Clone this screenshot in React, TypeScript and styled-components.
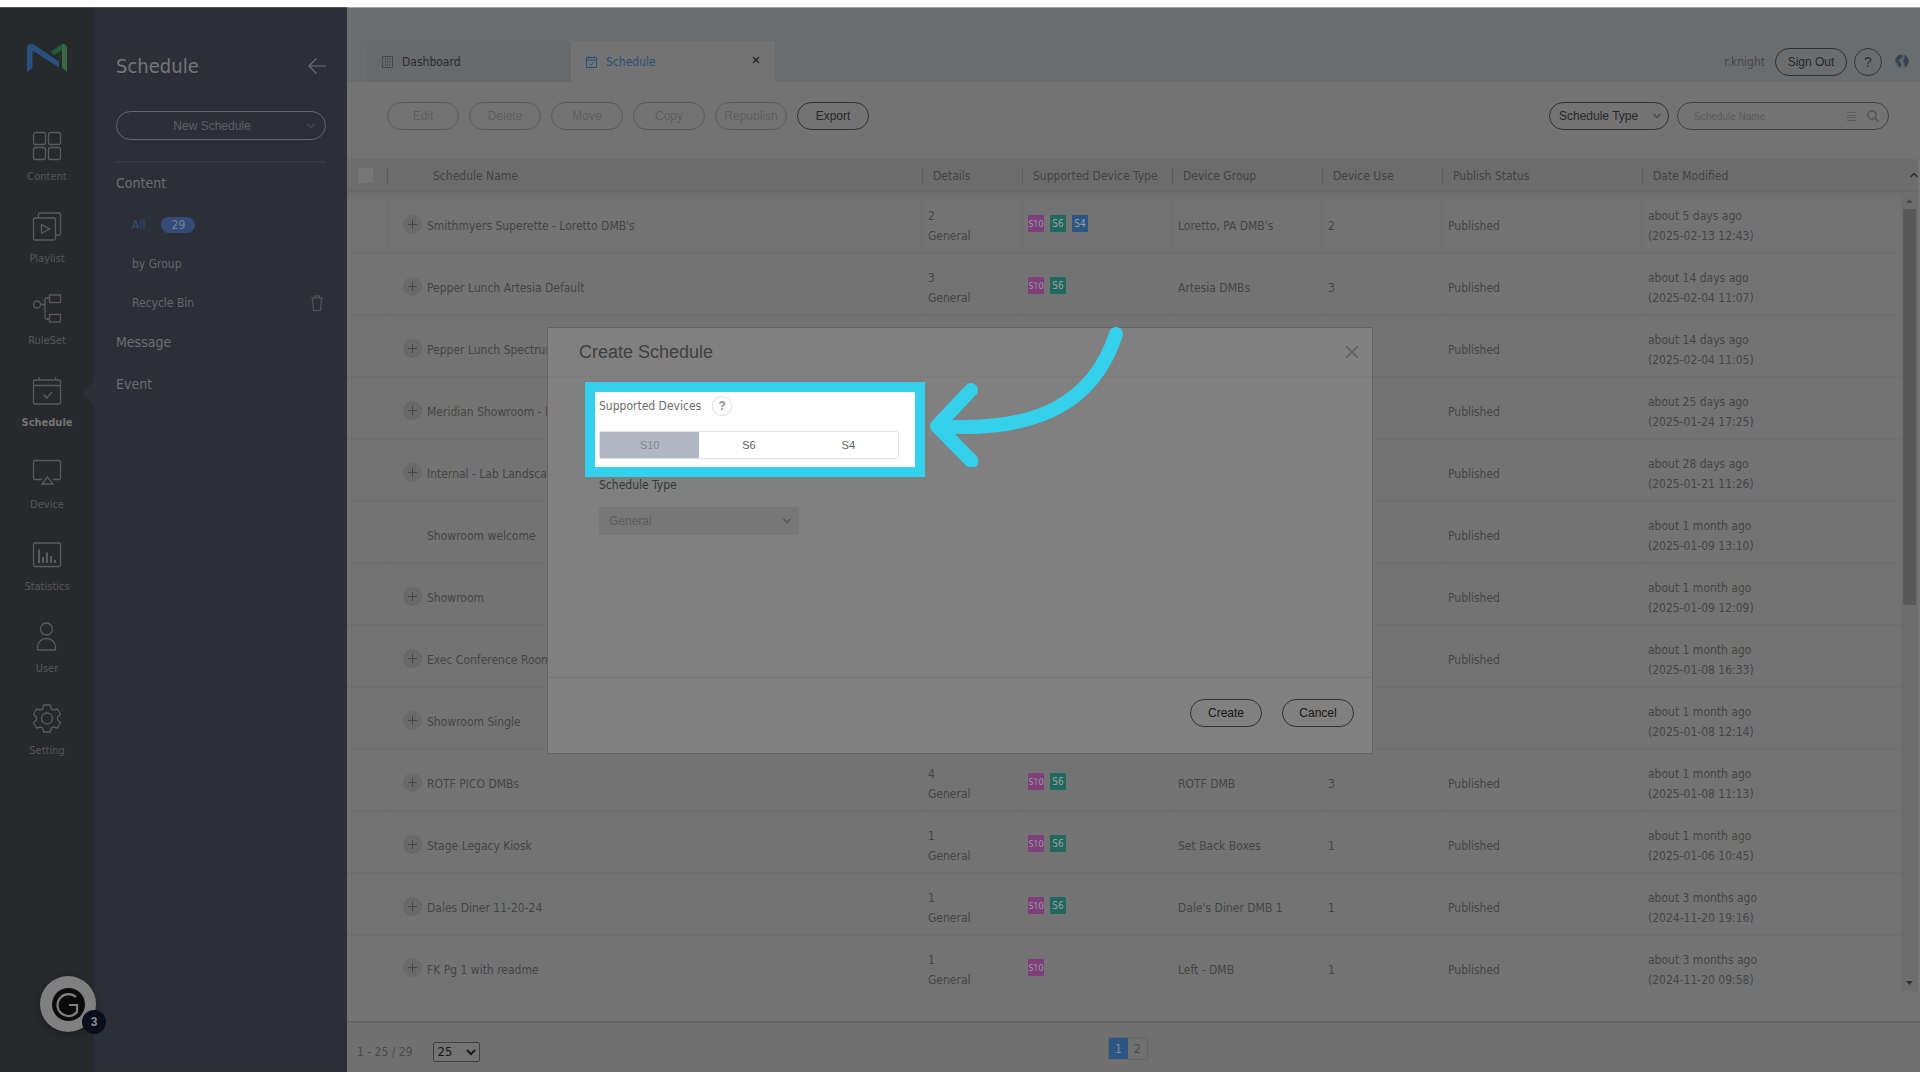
import React from "react";
import styled, { createGlobalStyle, css } from "styled-components";

const ui = `"DejaVu Sans Condensed", "Noto Sans", sans-serif`;
const arial = `"Liberation Sans", Arial, sans-serif`;
const cyan = "#34d0ec";

const Global = createGlobalStyle`
  * { box-sizing: border-box; }
  html, body, #root { height: 100%; }
  body { margin: 0; background: #fff; font-family: ${ui}; font-size: 12px; color: #444; overflow: hidden; }
  button, input, select { font-family: ${arial}; font-size: 12px; margin: 0; }
  button { padding: 0; background: none; border: 0; }
  a { color: inherit; text-decoration: none; }
  svg { display: block; flex: none; }
`;

const Page = styled.div`
  height: 100vh;
  padding: 7px 0 8px;
  display: flex;
`;

const Rail = styled.nav`
  width: 94px;
  flex: none;
  background: #28292c;
  border-top: 1px solid #55565a;
  display: flex;
  flex-direction: column;
  align-items: center;
  padding-top: 36px;
`;

const RailList = styled.div`
  width: 100%;
  margin-top: 58px;
`;

const RailItem = styled.a<{ $active?: boolean }>`
  position: relative;
  height: 82px;
  display: flex;
  flex-direction: column;
  align-items: center;
  gap: 11px;
  font-size: 11px;
  line-height: 14px;
  color: ${(p) => (p.$active ? "#757575" : "#575859")};
  font-weight: ${(p) => (p.$active ? 700 : 400)};
  ${(p) =>
    p.$active &&
    css`
      &::after {
        content: "";
        position: absolute;
        right: 0;
        top: 5px;
        border: 12px solid transparent;
        border-left: 0;
        border-right-color: #2d2f38;
      }
    `}
`;

const Side = styled.aside`
  width: 253px;
  flex: none;
  background: #2d2f38;
  border-top: 1px solid #55565a;
  padding: 38px 21px 0 22px;
  color: #6c6d70;
`;

const SideHead = styled.div`
  display: flex;
  align-items: center;
  justify-content: space-between;
  height: 40px;
  margin-bottom: 25px;
`;

const SideTitle = styled.h1`
  margin: 0;
  font-size: 20px;
  line-height: 42px;
  font-weight: 400;
  color: #757679;
`;

const NewButton = styled.button`
  width: 100%;
  height: 29px;
  border: 1px solid #66676b;
  border-radius: 15px;
  color: #5f6064;
  display: grid;
  grid-template-columns: 1fr 18px;
  align-items: center;
`;

const Rule = styled.hr`
  border: 0;
  height: 2px;
  background: #363841;
  margin: 21px 0 0;
`;

const SideGroup = styled.a`
  display: block;
  font-size: 14px;
  line-height: 40px;
  height: 42px;
`;

const SideLink = styled.a<{ $active?: boolean }>`
  display: flex;
  align-items: center;
  gap: 16px;
  height: 39px;
  padding: 0 3px 0 16px;
  color: ${(p) => (p.$active ? "#2c4d82" : "#66676a")};
  svg { margin-left: auto; }
`;

const Count = styled.span`
  background: #364a78;
  color: #75829c;
  border-radius: 8px;
  width: 34px;
  line-height: 16px;
  text-align: center;
`;

const Main = styled.main`
  flex: 1;
  min-width: 0;
  background: #737373;
  display: flex;
  flex-direction: column;
`;

const TopBar = styled.header`
  flex: none;
  height: 75px;
  background: #6b6c6e;
  border-top: 1px solid #a4a5a6;
  display: flex;
  align-items: flex-end;
  padding-left: 20px;
`;

const Tab = styled.a<{ $active?: boolean }>`
  width: 204px;
  height: 41px;
  display: flex;
  align-items: center;
  gap: 9px;
  padding: 0 15px;
  background: ${(p) => (p.$active ? "#737373" : "#67696d")};
  color: ${(p) => (p.$active ? "#284e7b" : "#2b2b2d")};
`;

const TabClose = styled.button`
  margin-left: auto;
  padding-bottom: 4px;
`;

const Account = styled.div`
  margin-left: auto;
  display: flex;
  align-items: center;
  height: 41px;
  padding-right: 11px;
  color: #454648;
`;

const Pill = styled.button<{ $off?: boolean; $dark?: boolean }>`
  width: 72px;
  height: 28px;
  border: 1px solid ${(p) => (p.$off ? "#5c5c5c" : "#303030")};
  border-radius: 14px;
  color: ${(p) => (p.$off ? "#5d5d5d" : p.$dark ? "#161616" : "#272727")};
`;

const Help = styled.button<{ $small?: boolean }>`
  width: ${(p) => (p.$small ? 20 : 28)}px;
  height: ${(p) => (p.$small ? 20 : 28)}px;
  border-radius: 50%;
  border: 1px solid ${(p) => (p.$small ? "#dddee4" : "#353638")};
  color: ${(p) => (p.$small ? "#8c8c8c" : "#303030")};
  font-size: ${(p) => (p.$small ? 12 : 14)}px;
  font-weight: ${(p) => (p.$small ? 700 : 400)};
`;

const AccountTools = styled.div`
  display: flex;
  align-items: center;
  gap: 7px;
  margin-left: 10px;
  svg { margin-left: 6px; }
`;

const Toolbar = styled.div`
  flex: none;
  height: 77px;
  display: flex;
  align-items: flex-start;
  gap: 10px;
  padding: 20px 31px 0 40px;
`;

const Filters = styled.div`
  margin-left: auto;
  display: flex;
  gap: 8px;
`;

const TypeButton = styled(Pill)`
  width: 120px;
  display: flex;
  align-items: center;
  justify-content: space-between;
  padding: 0 7px 0 9px;
`;

const Search = styled.label`
  width: 212px;
  height: 28px;
  border: 1px solid #404040;
  border-radius: 14px;
  display: flex;
  align-items: center;
  gap: 11px;
  padding: 0 9px 0 16px;
  input {
    flex: 1;
    min-width: 0;
    padding: 0;
    border: 0;
    outline: 0;
    background: none;
    font-size: 10px;
  }
  input::placeholder { color: #5a5a5a; opacity: 1; }
`;

const List = styled.div`
  flex: none;
  display: flex;
  padding-bottom: 30px;
  border-bottom: 2px solid #656565;
`;

const Grid = styled.table`
  flex: 1;
  width: 0;
  border-collapse: separate;
  border-spacing: 0;
  table-layout: fixed;
`;

const bar = (c: string) => `linear-gradient(${c}, ${c})`;

const Th = styled.th`
  height: 33px;
  padding: 2px 0 0 11px;
  text-align: left;
  font-weight: 400;
  line-height: 16px;
  color: #424242;
  border-bottom: 2px solid #676767;
  background: ${bar("#5c5c5c")} left 8px / 1px 18px no-repeat, #6c6c6c;
  &:first-child { padding-left: 11px; background: #6c6c6c; }
  &:nth-child(2) { padding-left: 46px; }
`;

const Check = styled.input`
  appearance: none;
  display: block;
  width: 15px;
  height: 15px;
  margin: 0;
  background: #767676;
`;

const Row = styled.tr`
  &:first-child td { box-shadow: inset 0 8px 8px -6px #6b6b6b; }
  &:last-child td { height: 55px; border-bottom: 0; padding-top: 2px; vertical-align: top; }
`;

const Td = styled.td<{ $raised?: boolean }>`
  height: 62px;
  padding: ${(p) => (p.$raised ? "2px 0 0 6px" : "8px 0 0 6px")};
  line-height: 20px;
  white-space: nowrap;
  overflow: hidden;
  border-bottom: 2px solid #6f6f6f;
  background: ${bar("#707070")} left 8px / 1px 100% no-repeat;
  &:first-child { background: none; }
`;

const Name = styled.div<{ $bare?: boolean }>`
  display: flex;
  align-items: center;
  gap: 5px;
  padding-left: ${(p) => (p.$bare ? 34 : 10)}px;
  svg { margin-bottom: 4px; }
`;

const Cell = styled.div<{ $top: number }>`
  padding-top: ${(p) => p.$top}px;
`;

const Chips = styled.div`
  display: flex;
  gap: 6px;
`;

const chipColors: Record<string, string> = { S10: "#7d3f7b", S6: "#20685e", S4: "#2b5582" };

const Chip = styled.span<{ $kind: string }>`
  width: 16px;
  height: 17px;
  line-height: 17px;
  border-radius: 1px;
  font-family: ${(p) => (p.$kind === "S10" ? `"Noto Sans", sans-serif` : ui)};
  font-size: ${(p) => (p.$kind === "S10" ? 9 : 10)}px;
  text-align: center;
  color: #9b9e9e;
  background: ${(p) => chipColors[p.$kind]};
`;

const ScrollSide = styled.div`
  width: 19px;
  flex: none;
  display: flex;
  flex-direction: column;
  border-right: 2px solid #777;
`;

const ScrollHead = styled.div`
  height: 33px;
  display: flex;
  align-items: center;
  justify-content: flex-end;
  background: #6c6c6c;
  border-bottom: 2px solid #676767;
`;

const Track = styled.div`
  flex: 1;
  padding: 0 2px;
  background: #6d6d6d;
  display: flex;
  flex-direction: column;
  align-items: center;
  justify-content: space-between;
`;

const Thumb = styled.div`
  width: 100%;
  height: 396px;
  background: #585858;
  margin-bottom: auto;
`;

const ArrowCell = styled.div`
  height: 17px;
  display: flex;
  align-items: center;
`;

const Footer = styled.footer`
  flex: 1;
  display: grid;
  grid-template-columns: 1fr auto 1fr;
  align-items: center;
  padding: 0 21px 0 10px;
  background: #707070;
  color: #4a4a4a;
`;

const PageInfo = styled.label`
  display: flex;
  align-items: center;
  gap: 20px;
  padding-top: 8px;
  select {
    width: 47px;
    height: 20px;
    padding: 0;
    font-family: ${ui};
    font-size: 13px;
    color: #191919;
    background: #737373;
    border: 1px solid #3f3f3f;
    border-radius: 2px;
  }
`;

const Pager = styled.div`
  display: flex;
  border: 1px solid #666;
  margin-top: 2px;
`;

const PageButton = styled.button<{ $on?: boolean }>`
  width: 19px;
  height: 21px;
  font-family: ${ui};
  color: ${(p) => (p.$on ? "#828d98" : "#484848")};
  background: ${(p) => (p.$on ? "#2b5582" : "transparent")};
`;

const Overlay = styled.div`
  position: fixed;
  inset: 0;
  display: flex;
  align-items: center;
  justify-content: center;
`;

const Dialog = styled.section`
  width: 826px;
  background: #808080;
  border: 1px solid #646464;
`;

const DialogHead = styled.header`
  height: 49px;
  display: flex;
  align-items: center;
  justify-content: space-between;
  padding: 1px 14px 0 31px;
  border-bottom: 1px solid #7b7b7b;
  h2 {
    margin: 0;
    font: 400 18px/24px ${arial};
    color: #3f3f3f;
  }
`;

const DialogBody = styled.div`
  height: 300px;
  padding: 5px 37px 0;
`;

const Spotlight = styled.fieldset`
  position: relative;
  width: 340px;
  height: 95px;
  margin: 0;
  padding: 4px 16px 0 4px;
  border: 10px solid ${cyan};
  background: #fff;
`;

const Pointer = styled.svg`
  position: absolute;
  left: 335px;
  top: -75px;
`;

const FieldHead = styled.div`
  display: flex;
  align-items: center;
  gap: 11px;
  height: 20px;
  margin-bottom: 15px;
  color: #6c6c6c;
`;

const Segments = styled.div`
  display: grid;
  grid-template-columns: repeat(3, 1fr);
  height: 28px;
  border: 1px solid #dddee6;
  border-radius: 3px;
`;

const Segment = styled.button<{ $on?: boolean }>`
  padding-top: 1px;
  font-size: 11px;
  color: ${(p) => (p.$on ? "#85878b" : "#606060")};
  background: ${(p) => (p.$on ? "#b2b7c3" : "#fff")};
`;

const Field = styled.div`
  padding: 0 14px;
  label {
    display: block;
    line-height: 16px;
    margin-bottom: 14px;
    color: #363636;
  }
`;

const SelectWrap = styled.div`
  width: 200px;
  height: 28px;
  display: flex;
  align-items: center;
  border-radius: 3px;
  background: #777;
  padding: 0 8px 0 10px;
  select {
    flex: 1;
    appearance: none;
    border: 0;
    padding: 0;
    background: none;
    color: #5c5c5c;
    opacity: 1;
  }
`;

const DialogFoot = styled.footer`
  height: 76px;
  display: flex;
  justify-content: flex-end;
  gap: 20px;
  padding: 21px 18px 0;
  border-top: 1px solid #747474;
`;

const ChatWidget = styled.button`
  position: fixed;
  left: 40px;
  bottom: 48px;
  width: 56px;
  height: 56px;
  border-radius: 50%;
  background: #808080;
  display: flex;
  align-items: center;
  justify-content: center;
  box-shadow: 0 2px 8px rgba(0, 0, 0, 0.3);
`;

const ChatCount = styled.span`
  position: absolute;
  left: 42px;
  top: 34px;
  width: 24px;
  height: 24px;
  line-height: 24px;
  border-radius: 50%;
  background: #080e1a;
  color: #8c8f94;
  font-weight: 700;
`;

const railIcons: Record<string, React.ReactNode> = {
  Content: (
    <>
      <rect x="0.5" y="2.500" width="12" height="12" rx="2" />
      <rect x="15.500" y="2.500" width="12" height="12" rx="2" />
      <rect x="0.5" y="17.500" width="12" height="12" rx="2" />
      <rect x="15.500" y="17.500" width="12" height="12" rx="2" />
    </>
  ),
  Playlist: (
    <>
      <rect x="0.5" y="6" width="22" height="22" rx="1.500" />
      <path d="M5.500 6V2.500a1.500 1.500 0 0 1 1.500-1.500h19a1.500 1.500 0 0 1 1.500 1.500v19a1.500 1.500 0 0 1-1.500 1.500h-3.500M8.500 12.500v9l8-4.500z" />
    </>
  ),
  RuleSet: (
    <>
      <circle cx="4" cy="10.500" r="3.500" />
      <path d="M7.500 10.500H12M16 4h-2.500a1.500 1.500 0 0 0-1.500 1.500v18a1.500 1.500 0 0 0 1.500 1.500H16" />
      <rect x="16.500" y="1" width="11" height="7.500" />
      <rect x="16.500" y="20.500" width="11" height="7.500" />
    </>
  ),
  Schedule: (
    <>
      <rect x="0.5" y="4" width="27" height="24" rx="1.500" />
      <path d="M6 1v3M22.500 1v3M.5 9.500h27M10.500 18.500l3.500 3.500 5-6" />
    </>
  ),
  Device: <path d="M9 21.500H2a1.500 1.500 0 0 1-1.500-1.500V4A1.500 1.500 0 0 1 2 2.500h24A1.500 1.500 0 0 1 27.500 4v16a1.500 1.500 0 0 1-1.500 1.500h-6M14.500 19l-5.500 7h11z" />,
  Statistics: (
    <>
      <rect x="0.5" y="3" width="27" height="23.500" rx="1.500" />
      <path strokeWidth="2" d="M6 9.500v13.500M10 17v6M14 12.500v10.500M18 16v7M22 20v3" />
    </>
  ),
  User: (
    <>
      <circle cx="13.500" cy="7" r="6" />
      <path d="M4.500 28v-3a9 8.500 0 0 1 18 0v3z" />
    </>
  ),
  Setting: (
    <>
      <circle cx="14" cy="14.500" r="5.500" />
      <path strokeLinejoin="round" d="M10.800 1h6.400l1.200 4 1.800 1 4.300-1 3 5.200-2.900 2.800v3l2.900 2.800-3 5.200-4.300-1-1.800 1-1.200 4h-6.400l-1.200-4-1.800-1-4.300 1-3-5.200L3.400 16v-3L.5 10.200l3-5.200 4.300 1 1.800-1z" />
    </>
  ),
};

const Chevron = ({ color }: { color: string }) => (
  <svg width="8" height="6" fill="none" stroke={color} strokeWidth="1.500">
    <path d="M.5 1l3.500 3.500L7.500 1" />
  </svg>
);

const Plus = () => (
  <svg width="19" height="19" viewBox="0 0 19 19">
    <circle cx="9.500" cy="9.500" r="9.500" fill="#696969" />
    <path d="M5 9.500h9M9.500 5v9" stroke="#444" />
  </svg>
);

type Item = {
  name: string;
  bare?: boolean;
  details?: string;
  types?: string[];
  group?: string;
  use?: string;
  status?: string;
  ago: string;
  date: string;
};

const P = "Published";
const items: Item[] = [
  { name: "Smithmyers Superette - Loretto DMB's", details: "2", types: ["S10", "S6", "S4"], group: "Loretto, PA DMB's", use: "2", status: P, ago: "about 5 days ago", date: "(2025-02-13 12:43)" },
  { name: "Pepper Lunch Artesia Default", details: "3", types: ["S10", "S6"], group: "Artesia DMBs", use: "3", status: P, ago: "about 14 days ago", date: "(2025-02-04 11:07)" },
  { name: "Pepper Lunch Spectrum", status: P, ago: "about 14 days ago", date: "(2025-02-04 11:05)" },
  { name: "Meridian Showroom - L", status: P, ago: "about 25 days ago", date: "(2025-01-24 17:25)" },
  { name: "Internal - Lab Landscape", status: P, ago: "about 28 days ago", date: "(2025-01-21 11:26)" },
  { name: "Showroom welcome", bare: true, status: P, ago: "about 1 month ago", date: "(2025-01-09 13:10)" },
  { name: "Showroom", status: P, ago: "about 1 month ago", date: "(2025-01-09 12:09)" },
  { name: "Exec Conference Room", status: P, ago: "about 1 month ago", date: "(2025-01-08 16:33)" },
  { name: "Showroom Single", ago: "about 1 month ago", date: "(2025-01-08 12:14)" },
  { name: "ROTF PICO DMBs", details: "4", types: ["S10", "S6"], group: "ROTF DMB", use: "3", status: P, ago: "about 1 month ago", date: "(2025-01-08 11:13)" },
  { name: "Stage Legacy Kiosk", details: "1", types: ["S10", "S6"], group: "Set Back Boxes", use: "1", status: P, ago: "about 1 month ago", date: "(2025-01-06 10:45)" },
  { name: "Dales Diner 11-20-24", details: "1", types: ["S10", "S6"], group: "Dale's Diner DMB 1", use: "1", status: P, ago: "about 3 months ago", date: "(2024-11-20 19:16)" },
  { name: "FK Pg 1 with readme", details: "1", types: ["S10"], group: "Left - DMB", use: "1", status: P, ago: "about 3 months ago", date: "(2024-11-20 09:58)" },
];

const columns = ["Schedule Name", "Details", "Supported Device Type", "Device Group", "Device Use", "Publish Status", "Date Modified"];

export default function App() {
  return (
    <>
      <Global />
      <Page>
        <Rail>
          <svg width="40" height="28" viewBox="0 0 40 28">
            <path d="M0 28V4Q0 0 4 0q2 0 3.500 1L32 17.500V23.500L5.500 6.500V24z" fill="#27527d" />
            <path d="M23 8L33.500 1q2-1.200 4-.8L35 6l-7.500 5z" fill="#1e5c36" />
            <path d="M35 0q5 0 5 4v24l-5-4z" fill="#386843" />
          </svg>
          <RailList>
            {Object.keys(railIcons).map((k) => (
              <RailItem key={k} href="#" $active={k === "Schedule"}>
                <svg width="28" height="29" viewBox="0 0 28 29" fill="none" stroke="#5a5b5d" strokeWidth="1.300" overflow="visible">
                  {railIcons[k]}
                </svg>
                {k}
              </RailItem>
            ))}
          </RailList>
        </Rail>

        <Side>
          <SideHead>
            <SideTitle>Schedule</SideTitle>
            <svg width="18" height="16" fill="none" stroke="#6e6f72" strokeWidth="1.200">
              <path d="M18 8H1M8.500 .5L1 8l7.500 7.500" />
            </svg>
          </SideHead>
          <NewButton>
            New Schedule
            <Chevron color="#47484d" />
          </NewButton>
          <Rule />
          <SideGroup href="#">Content</SideGroup>
          <SideLink href="#" $active>
            All <Count>29</Count>
          </SideLink>
          <SideLink href="#">by Group</SideLink>
          <SideLink href="#">
            Recycle Bin
            <svg width="12" height="16" fill="none" stroke="#55565b" strokeWidth="1.200">
              <path d="M0 3h12M3.500 3V1h5v2M1.500 3l1 12.500h7l1-12.500" />
            </svg>
          </SideLink>
          <SideGroup href="#">Message</SideGroup>
          <SideGroup href="#">Event</SideGroup>
        </Side>

        <Main>
          <TopBar>
            <Tab href="#">
              <svg width="11" height="12" fill="none" stroke="#45464a">
                <path d="M.5.5h10v11H.5z" />
                <path d="M3.500 2v8M5.500 2v8M8 2v8" strokeDasharray="2 1" />
              </svg>
              Dashboard
            </Tab>
            <Tab as="div" $active>
              <svg width="11" height="12" fill="none" stroke="#284e7b">
                <path d="M.5 1.500h10v10H.5zM.5 4h10M2.500 0v2M8.500 0v2M3 7.500l2 2 3-3.500" />
              </svg>
              Schedule
              <TabClose aria-label="Close tab">
                <svg width="8" height="8" stroke="#2a2a2a" strokeWidth="1.600">
                  <path d="M1 1l6 6M7 1L1 7" />
                </svg>
              </TabClose>
            </Tab>
            <Account>
              r.knight
              <AccountTools>
                <Pill>Sign Out</Pill>
                <Help aria-label="Help">?</Help>
                <svg width="14" height="15" viewBox="0 0 14 15">
                  <circle cx="7" cy="7.500" r="7" fill="#5e676f" />
                  <path d="M.5 5Q2.500 1 6 .6L8 2 6.500 4 4.500 5.500 3.500 7 5.500 8.500 6 11 5 13.500 3.500 12.500 2.500 9.500.5 8zM9 1Q13 2.500 13.800 6.500L13 10l-2 3-1.500-1V9L8 7l1.500-2.500z" fill="#36424e" />
                </svg>
              </AccountTools>
            </Account>
          </TopBar>

          <Toolbar>
            {["Edit", "Delete", "Move", "Copy", "Republish"].map((b) => (
              <Pill key={b} $off>
                {b}
              </Pill>
            ))}
            <Pill>Export</Pill>
            <Filters>
              <TypeButton>
                Schedule Type
                <Chevron color="#484848" />
              </TypeButton>
              <Search>
                <input aria-label="Schedule Name" placeholder="Schedule Name" />
                <svg width="9" height="9" stroke="#5c5c5c">
                  <path d="M0 .5h9M0 3.500h9M0 5.500h9M0 8.500h9" />
                </svg>
                <svg width="12" height="12" fill="none" stroke="#555" strokeWidth="1.600">
                  <circle cx="5" cy="5" r="4" />
                  <path d="M8 8l3.500 3.500" />
                </svg>
              </Search>
            </Filters>
          </Toolbar>

          <List>
            <Grid>
              <colgroup>
                <col width="40" />
                <col />
                <col width="100" />
                <col width="150" />
                <col width="150" />
                <col width="120" />
                <col width="200" />
                <col width="259" />
              </colgroup>
              <thead>
                <tr>
                  <Th>
                    <Check type="checkbox" aria-label="Select all" />
                  </Th>
                  {columns.map((c) => (
                    <Th key={c}>{c}</Th>
                  ))}
                </tr>
              </thead>
              <tbody>
                {items.map((r, i) => {
                  const last = i === items.length - 1;
                  return (
                    <Row key={r.name}>
                      <Td />
                      <Td>
                        <Cell $top={last ? 20 : 0}>
                          <Name $bare={r.bare}>
                            {!r.bare && <Plus />}
                            {r.name}
                          </Name>
                        </Cell>
                      </Td>
                      <Td>
                        {r.details && (
                          <Cell $top={last ? 12 : 0}>
                            {r.details}
                            <br />
                            General
                          </Cell>
                        )}
                      </Td>
                      <Td $raised>
                        {r.types && (
                          <Cell $top={last ? 21 : 0}>
                            <Chips>
                              {r.types.map((t) => (
                                <Chip key={t} $kind={t}>
                                  {t}
                                </Chip>
                              ))}
                            </Chips>
                          </Cell>
                        )}
                      </Td>
                      {[r.group, r.use, r.status].map((v, j) => (
                        <Td key={j}>
                          <Cell $top={last ? 22 : 0}>{v}</Cell>
                        </Td>
                      ))}
                      <Td>
                        <Cell $top={last ? 12 : 0}>
                          {r.ago}
                          <br />
                          {r.date}
                        </Cell>
                      </Td>
                    </Row>
                  );
                })}
              </tbody>
            </Grid>
            <ScrollSide>
              <ScrollHead>
                <svg width="8" height="6" fill="none" stroke="#2c2c2c" strokeWidth="1.500">
                  <path d="M.5 5L4 1.500 7.500 5" />
                </svg>
              </ScrollHead>
              <Track>
                <ArrowCell>
                  <svg width="7" height="4" fill="#4c4c4c">
                    <path d="M0 4l3.500-4L7 4z" />
                  </svg>
                </ArrowCell>
                <Thumb />
                <ArrowCell>
                  <svg width="7" height="4" fill="#333">
                    <path d="M0 0l3.500 4L7 0z" />
                  </svg>
                </ArrowCell>
              </Track>
            </ScrollSide>
          </List>

          <Footer>
            <PageInfo>
              1 - 25 / 29
              <select defaultValue="25">
                <option>25</option>
                <option>50</option>
              </select>
            </PageInfo>
            <Pager>
              <PageButton $on>1</PageButton>
              <PageButton>2</PageButton>
            </Pager>
          </Footer>
        </Main>
      </Page>

      <ChatWidget aria-label="Open chat">
        <svg width="33" height="33" viewBox="0 0 33 33">
          <circle cx="16.500" cy="16.500" r="16.500" fill="#0a0a0a" />
          <path d="M24 9A11 11 0 1 0 25 24V17h-8" fill="none" stroke="#808080" strokeWidth="2.200" />
        </svg>
        <ChatCount>3</ChatCount>
      </ChatWidget>

      <Overlay>
        <Dialog role="dialog" aria-labelledby="dialog-title">
          <DialogHead>
            <h2 id="dialog-title">Create Schedule</h2>
            <button aria-label="Close">
              <svg width="12" height="12" stroke="#565656" strokeWidth="1.300">
                <path d="M.5.5l11 11M11.500.5l-11 11" />
              </svg>
            </button>
          </DialogHead>
          <DialogBody>
            <Spotlight aria-label="Supported Devices">
              <FieldHead>
                Supported Devices
                <Help $small aria-label="About supported devices">
                  ?
                </Help>
              </FieldHead>
              <Segments>
                <Segment $on>S10</Segment>
                <Segment>S6</Segment>
                <Segment>S4</Segment>
              </Segments>
              <Pointer width="200" height="150" fill="none" stroke={cyan} strokeWidth="14" strokeLinecap="round" strokeLinejoin="round">
                <path d="M186 17C164 85 108 116 7 109M41 73L7 109l34.500 35" />
              </Pointer>
            </Spotlight>
            <Field>
              <label htmlFor="schedule-type">Schedule Type</label>
              <SelectWrap>
                <select id="schedule-type" disabled defaultValue="General">
                  <option>General</option>
                </select>
                <Chevron color="#555" />
              </SelectWrap>
            </Field>
          </DialogBody>
          <DialogFoot>
            <Pill $dark>Create</Pill>
            <Pill $dark>Cancel</Pill>
          </DialogFoot>
        </Dialog>
      </Overlay>
    </>
  );
}
